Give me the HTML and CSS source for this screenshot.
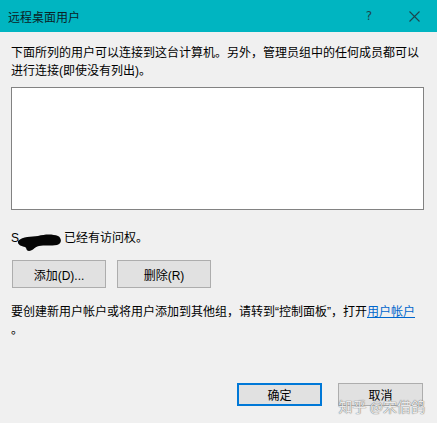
FILE: index.html
```html
<!DOCTYPE html>
<html lang="zh-CN">
<head>
<meta charset="utf-8">
<link rel="stylesheet" href="styles.css">
</head>
<body>
<div class="window">
  <div class="titlebar">
    <span class="title">远程桌面用户</span>
    <div class="controls">
      <span class="help">?</span>
      <svg class="close" width="11" height="11" viewBox="0 0 11 11"><path d="M0.5 0.5 L10.5 10.5 M10.5 0.5 L0.5 10.5" stroke="#1d454d" stroke-width="1.1" fill="none"/></svg>
    </div>
  </div>
  <div class="content">
    <p class="intro">下面所列的用户可以连接到这台计算机。另外，管理员组中的任何成员都可以<br>进行连接(即使没有列出)。</p>
    <div class="listbox"></div>
    <p class="access"><span class="user">S<svg class="blot" width="44" height="18" viewBox="0 0 44 18"><path d="M0 7 C5 2 13 3 20 2 C27 0 35 0 40 2 C44 4 44 10 39 11 C33 12 26 11 21 12 C16 13 15 17 11 17 C8 17 9 14 7 13 C4 12 -1 11 0 7 Z" fill="#050505"/></svg></span>已经有访问权。</p>
    <div class="row">
      <button class="btn">添加(D)...</button>
      <button class="btn">删除(R)</button>
    </div>
    <p class="note">要创建新用户帐户或将用户添加到其他组，请转到“控制面板”，打开<a class="link">用户帐户</a><br>。</p>
    <div class="footer">
      <button class="btn small primary">确定</button>
      <button class="btn small">取消</button>
    </div>
  </div>
  <div class="watermark">知乎 @宋借鸽</div>
</div>
</body>
</html>
```
FILE: styles.css
```css
html, body {
  margin: 0;
  padding: 0;
  background: #f0f0f0;
}
.window {
  position: relative;
  width: 437px;
  height: 423px;
  background: #f0f0f0;
  font-family: "Liberation Sans", "Noto Sans CJK SC", sans-serif;
  font-size: 12px;
  color: #000;
  overflow: hidden;
}
.titlebar {
  height: 32px;
  background: #00b5c1;
  display: flex;
  align-items: center;
  justify-content: space-between;
  padding: 0 17px 0 8px;
}
.title {
  font-size: 12px;
  color: #0b2226;
}
.controls {
  display: flex;
  align-items: center;
  gap: 37px;
}
.help {
  font-family: "DejaVu Sans", sans-serif;
  font-size: 12px;
  color: #1d454d;
}
.close {
  display: block;
}
.content {
  padding: 12px 13px 0 11px;
}
.intro {
  margin: 0;
  line-height: 18px;
  white-space: nowrap;
}
.listbox {
  margin-top: 7px;
  height: 121px;
  background: #fff;
  border: 1px solid #828282;
}
.access {
  margin: 19px 0 0;
  height: 18px;
  line-height: 18px;
  display: flex;
  align-items: center;
}
.user {
  display: inline-flex;
  align-items: center;
  height: 18px;
  margin-right: 2px;
}
.blot {
  display: block;
  margin-left: -1px;
  margin-top: 5px;
  margin-bottom: -5px;
}
.row {
  margin-top: 13px;
  display: flex;
  gap: 11px;
  padding-left: 1px;
}
.btn {
  font-family: "Liberation Sans", "Noto Sans CJK SC", sans-serif;
  font-size: 12px;
  color: #000;
  width: 94px;
  height: 28px;
  background: #e1e1e1;
  border: 1px solid #adadad;
  padding: 0;
  margin: 0;
}
.note {
  margin: 15px 0 0;
  line-height: 18px;
  white-space: nowrap;
}
.link {
  color: #0066cc;
  text-decoration: underline;
}
.footer {
  margin-top: 44px;
  display: flex;
  justify-content: flex-end;
  gap: 16px;
  padding-right: 1px;
}
.btn.small {
  width: 85px;
  height: 23px;
}
.btn.primary {
  border: 2px solid #0078d7;
}
.watermark {
  position: absolute;
  right: 12px;
  bottom: 7px;
  font-family: "Noto Sans CJK SC", sans-serif;
  font-size: 14px;
  line-height: 20px;
  color: rgba(255, 255, 255, 0.85);
  text-shadow: 0 0 1px #777, 0 0 1px #777;
}
```
